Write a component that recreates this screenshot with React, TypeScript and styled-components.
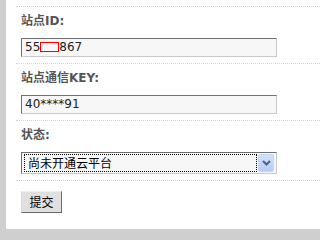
import React from 'react';
import styled, { createGlobalStyle } from 'styled-components';

const GlobalStyle = createGlobalStyle`
  html, body {
    margin: 0;
    padding: 0;
    background: #cfcfcf;
  }
`;

const Panel = styled.div`
  margin-left: 6px;
  height: 229px;
  box-sizing: border-box;
  padding: 6px 0 0 10px;
  background: #ffffff;
  font-family: 'Noto Sans CJK SC', 'DejaVu Sans', sans-serif;
`;

const Row = styled.div<{ $last?: boolean }>`
  border-top: 1px dotted #c9d9e6;
  padding: ${(p) => (p.$last ? '10px 0 0 5px' : '1px 0 6px 5px')};
`;

const Label = styled.div`
  margin-top: 1px;
  height: 24px;
  line-height: 24px;
  font-family: 'DejaVu Sans', 'Noto Sans CJK SC', sans-serif;
  font-size: 12px;
  font-weight: bold;
  color: #555555;
`;

const Field = styled.div`
  margin-top: 5px;
  width: 256px;
  height: 19px;
  box-sizing: border-box;
  border: 1px solid;
  border-color: #6f6f6f #c8c8c8 #c8c8c8 #6f6f6f;
  background: #f7f7f7;
  padding-left: 3px;
  font-family: 'DejaVu Sans', sans-serif;
  font-size: 12px;
  line-height: 17px;
  color: #222222;
  white-space: nowrap;
`;

const Redact = styled.span`
  display: inline-block;
  width: 19px;
  height: 10px;
  box-sizing: border-box;
  border: 1px solid #ff0000;
  vertical-align: -1px;
`;

const SelectBox = styled.div`
  margin-top: 5px;
  width: 256px;
  height: 22px;
  box-sizing: border-box;
  border: 1px solid;
  border-color: #6f6f6f #c8c8c8 #c8c8c8 #6f6f6f;
  background: #f7f7f7;
  padding: 1px 2px;
  display: flex;
  gap: 1px;
`;

const SelectValue = styled.div`
  flex: 1;
  box-sizing: border-box;
  border: 1px dotted #000000;
  padding-left: 3px;
  font-size: 12px;
  line-height: 16px;
  color: #000000;
`;

const ArrowButton = styled.div`
  width: 16px;
  box-sizing: border-box;
  border: 1px solid #c6d6f6;
  border-radius: 2px;
  background: linear-gradient(#d3e1fc, #b6cbf7);
  display: flex;
  align-items: center;
  justify-content: center;
`;

const SubmitButton = styled.button`
  display: block;
  width: 41px;
  height: 22px;
  padding: 0;
  box-sizing: border-box;
  border: 1px solid;
  border-color: #eeeeee #6a6a6a #6a6a6a #d8d8d8;
  background: #e0e0e0;
  font-family: 'Noto Sans CJK SC', sans-serif;
  font-size: 12px;
  line-height: 20px;
  color: #000000;
`;

export default function App() {
  return (
    <>
      <GlobalStyle />
      <Panel>
        <Row>
          <Label>站点ID:</Label>
          <Field>
            55<Redact />867
          </Field>
        </Row>
        <Row>
          <Label>站点通信KEY:</Label>
          <Field>40****91</Field>
        </Row>
        <Row>
          <Label>状态:</Label>
          <SelectBox>
            <SelectValue>尚未开通云平台</SelectValue>
            <ArrowButton>
              <svg width="9" height="6" viewBox="0 0 9 6">
                <path d="M1 1 L4.5 4.5 L8 1" stroke="#4d6185" strokeWidth="2" fill="none" />
              </svg>
            </ArrowButton>
          </SelectBox>
        </Row>
        <Row $last>
          <SubmitButton>提交</SubmitButton>
        </Row>
      </Panel>
    </>
  );
}
